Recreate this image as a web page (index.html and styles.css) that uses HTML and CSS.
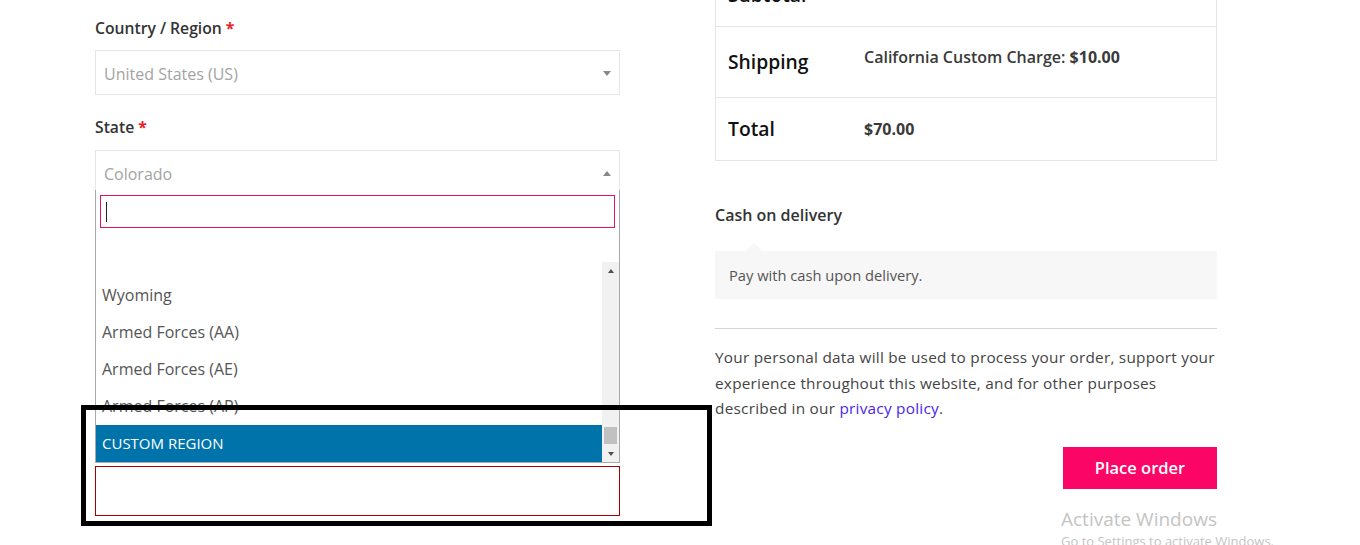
FILE: index.html
```html
<!DOCTYPE html>
<html lang="en">
<head>
<meta charset="utf-8">
<title>Checkout</title>
<link rel="stylesheet" href="styles.css">
</head>
<body>
<div class="page">
  <div class="col-left">
    <div class="field">
      <label class="lbl">Country / Region <span class="req">*</span></label>
      <div class="select">
        <span class="sel-text">United States (US)</span>
        <span class="arrow arrow-down"></span>
      </div>
    </div>
    <div class="field field-state">
      <label class="lbl">State <span class="req">*</span></label>
      <div class="select select-open">
        <span class="sel-text">Colorado</span>
        <span class="arrow arrow-up"></span>
      </div>
      <div class="dropdown">
        <div class="search">
          <div class="search-input"><span class="caret"></span></div>
        </div>
        <div class="results">
          <ul class="opts">
            <li class="opt">Wyoming</li>
            <li class="opt">Armed Forces (AA)</li>
            <li class="opt">Armed Forces (AE)</li>
            <li class="opt">Armed Forces (AP)</li>
            <li class="opt opt-hl">CUSTOM REGION</li>
          </ul>
          <div class="sbar">
            <div class="sbtn"><span class="sarrow sarrow-up"></span></div>
            <div class="strack"><div class="sthumb"></div></div>
            <div class="sbtn"><span class="sarrow sarrow-down"></span></div>
          </div>
        </div>
      </div>
      <div class="err-input"></div>
    </div>
  </div>

  <div class="col-right">
    <div class="totals">
      <div class="trow trow-top trow-sub">
        <div class="th">Subtotal</div>
        <div class="td"><strong>$60.00</strong></div>
      </div>
      <div class="trow trow-top trow-ship">
        <div class="th">Shipping</div>
        <div class="td">California Custom Charge: <strong>$10.00</strong></div>
      </div>
      <div class="trow">
        <div class="th">Total</div>
        <div class="td"><strong>$70.00</strong></div>
      </div>
    </div>

    <div class="pay-title">Cash on delivery</div>
    <div class="pay-box">Pay with cash upon delivery.</div>

    <div class="rule"></div>

    <p class="privacy">Your personal data will be used to process your order, support your experience throughout this website, and for other purposes described in our <a class="plink" href="#">privacy policy</a>.</p>

    <div class="actions">
      <button class="place" type="button">Place order</button>
    </div>
  </div>
</div>

<div class="annot"></div>

<div class="watermark">
  <div class="wm-1">Activate Windows</div>
  <div class="wm-2">Go to Settings to activate Windows.</div>
</div>
</body>
</html>
```

FILE: styles.css
```css
* { box-sizing: border-box; }

html, body {
  margin: 0;
  padding: 0;
  background: #fff;
  overflow: hidden;
}

body {
  font-family: "Open Sans", "Noto Sans", sans-serif;
  color: #333;
  width: 1360px;
  height: 545px;
  position: relative;
}

.page {
  display: flex;
  align-items: flex-start;
  padding-left: 95px;
}

/* ---------- left column ---------- */
.col-left {
  width: 525px;
  padding-top: 16px;
}

.lbl {
  display: block;
  font-size: 15.7px;
  line-height: 24px;
  font-weight: 600;
  color: #333;
}

.req {
  color: #ee1c25;
  font-weight: 700;
}

.select {
  margin-top: 10px;
  height: 45px;
  border: 1px solid #e6e6e6;
  padding: 11px 8px 0 8px;
  display: flex;
  justify-content: space-between;
  align-items: flex-start;
}

.sel-text {
  font-size: 16px;
  line-height: 24px;
  color: #a3a3a3;
}

.arrow {
  width: 0;
  height: 0;
  margin-top: 9px;
  border-left: 4px solid transparent;
  border-right: 4px solid transparent;
}
.arrow-down { border-top: 5px solid #888; }
.arrow-up { border-bottom: 5px solid #888; }

.field-state { margin-top: 20px; }
.field-state .select { margin-top: 11px; }

.select-open {
  height: 40px;
  border-bottom: none;
}

.dropdown {
  border: 1px solid #aaa;
  border-top: none;
  background: #fff;
}

.search {
  padding: 5px 4px 0 4px;
}

.search-input {
  height: 33px;
  border: 1px solid #e5135f;
  padding: 6px 5px;
}

.caret {
  display: block;
  width: 1px;
  height: 20px;
  background: #222;
}

.results {
  margin-top: 34px;
  height: 200px;
  display: flex;
  overflow: hidden;
}

.opts {
  list-style: none;
  margin: 0;
  padding: 15px 0 0 0;
  flex: 1;
}

.opt {
  height: 37px;
  line-height: 37px;
  padding-left: 6px;
  font-size: 16px;
  color: #555;
}

.opt-hl {
  background: #0073aa;
  color: #fff;
  font-size: 15px;
  font-weight: 500;
}

.sbar {
  width: 17px;
  background: #f1f1f1;
  display: flex;
  flex-direction: column;
}

.sbtn {
  height: 17px;
  display: flex;
  align-items: center;
  justify-content: center;
}

.sarrow {
  width: 0;
  height: 0;
  border-left: 3.5px solid transparent;
  border-right: 3.5px solid transparent;
}
.sarrow-up { border-bottom: 4px solid #505050; }
.sarrow-down { border-top: 4px solid #505050; }

.strack {
  flex: 1;
  display: flex;
  flex-direction: column;
  justify-content: flex-end;
  padding: 0 2px 1px 2px;
}

.sthumb {
  height: 17px;
  background: #c1c1c1;
}

.err-input {
  margin-top: 3px;
  height: 50px;
  border: 1px solid #a30000;
}

/* ---------- right column ---------- */
.col-right {
  width: 502px;
  margin-left: 95px;
  margin-top: -37px;
}

.totals {
  border: 1px solid #e5e5e5;
}

.trow {
  display: flex;
  align-items: center;
  padding: 19px 12px;
  height: 63px;
  border-bottom: 1px solid #e5e5e5;
}
.trow:last-child {
  border-bottom: none;
  height: 62px;
}

.trow-top {
  align-items: flex-start;
  padding-top: 0;
  padding-bottom: 0;
}

.trow-ship { height: 71px; }

.th {
  width: 136px;
  font-size: 19.3px;
  line-height: 24px;
  font-weight: 600;
  color: #111;
}

.td {
  font-size: 16px;
  line-height: 24px;
  font-weight: 600;
  color: #3a3a3a;
}

.td strong { font-weight: 700; }

.trow-sub .th { margin-top: 19px; }
.trow-sub .td { margin-top: 13px; }
.trow-ship .th { margin-top: 23px; }
.trow-ship .td { margin-top: 18px; }

.pay-title {
  margin-top: 42px;
  font-size: 16px;
  line-height: 24px;
  font-weight: 600;
  color: #333;
}

.pay-box {
  position: relative;
  margin-top: 24px;
  height: 48px;
  line-height: 48px;
  padding: 0 14px;
  background: #f7f7f7;
  font-size: 14.7px;
  color: #555;
}

.pay-box::before {
  content: "";
  position: absolute;
  left: 31px;
  top: -8px;
  border-left: 8px solid transparent;
  border-right: 8px solid transparent;
  border-bottom: 8px solid #f7f7f7;
}

.rule {
  margin-top: 29px;
  height: 1px;
  background: #d6d6d6;
}

.privacy {
  margin: 16px 0 0 0;
  font-size: 15.35px;
  letter-spacing: 0.24px;
  line-height: 25.5px;
  color: #444;
}

.plink {
  color: #4a25e8;
  text-decoration: none;
}

.actions {
  margin-top: 25px;
  display: flex;
  justify-content: flex-end;
}

.place {
  width: 154px;
  height: 42px;
  border: none;
  background: #fb0566;
  color: #fff;
  font-family: "Open Sans", "Noto Sans", sans-serif;
  font-size: 16.5px;
  font-weight: 600;
  padding: 0;
}

/* ---------- overlays ---------- */
.annot {
  position: absolute;
  left: 81px;
  top: 405px;
  width: 631px;
  height: 121px;
  border: 5px solid #000;
}

.watermark {
  position: absolute;
  left: 1061px;
  top: 506px;
  color: #c4c4c4;
  font-family: "Open Sans", "Noto Sans", sans-serif;
}

.wm-1 {
  font-size: 19px;
  line-height: 26px;
}

.wm-2 {
  font-size: 13px;
  line-height: 18px;
}
```
